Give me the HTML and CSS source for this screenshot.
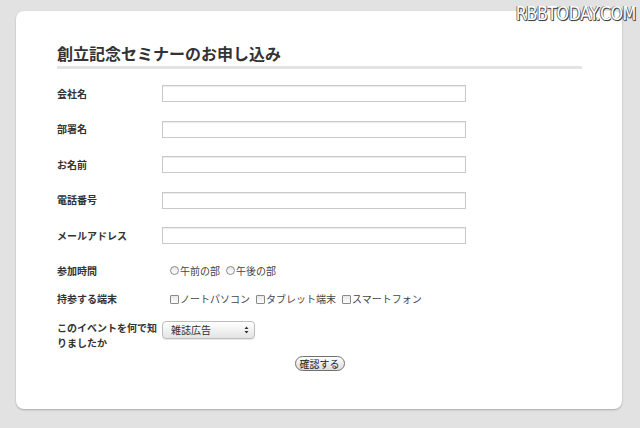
FILE: index.html
```html
<!DOCTYPE html>
<html lang="ja">
<head>
<meta charset="utf-8">
<title>創立記念セミナーのお申し込み</title>
<link rel="stylesheet" href="styles.css">
</head>
<body>
<div class="watermark">RBBTODAY.COM</div>
<div class="card">
  <h1 class="title">創立記念セミナーのお申し込み</h1>
  <div class="form">
    <div class="row text-row"><div class="label">会社名</div><div class="field"><span class="input"></span></div></div>
    <div class="row text-row"><div class="label">部署名</div><div class="field"><span class="input"></span></div></div>
    <div class="row text-row"><div class="label">お名前</div><div class="field"><span class="input"></span></div></div>
    <div class="row text-row"><div class="label">電話番号</div><div class="field"><span class="input"></span></div></div>
    <div class="row text-row"><div class="label">メールアドレス</div><div class="field"><span class="input"></span></div></div>
    <div class="row radio-row"><div class="label">参加時間</div>
      <div class="field options">
        <span class="opt"><span class="radio"></span>午前の部</span>
        <span class="opt"><span class="radio"></span>午後の部</span>
      </div>
    </div>
    <div class="row check-row"><div class="label">持参する端末</div>
      <div class="field options">
        <span class="opt"><span class="check"></span>ノートパソコン</span>
        <span class="opt"><span class="check"></span>タブレット端末</span>
        <span class="opt"><span class="check"></span>スマートフォン</span>
      </div>
    </div>
    <div class="row select-row"><div class="label multi">このイベントを何で知りましたか</div>
      <div class="field">
        <span class="select"><span class="select-text">雑誌広告</span>
          <svg class="arrows" width="5" height="8" viewBox="0 0 5 8"><path d="M2.5 0.5 L4.5 3 L0.5 3 Z M0.5 5 L4.5 5 L2.5 7.5 Z" fill="#333"/></svg>
        </span>
      </div>
    </div>
    <div class="submit-row"><span class="button">確認する</span></div>
  </div>
</div>
</body>
</html>
```

FILE: styles.css
```css
html, body {
  margin: 0;
  padding: 0;
}
body {
  background: #e2e2e2;
  width: 640px;
  height: 428px;
  overflow: hidden;
  position: relative;
  font-family: "Noto Sans CJK JP", "Liberation Sans", sans-serif;
  color: #333;
  padding: 11px 0 0 16px;
  box-sizing: border-box;
}
.watermark {
  position: absolute;
  top: 1px;
  right: 4px;
  font-family: "DejaVu Sans", "Liberation Sans", sans-serif;
  font-size: 19px;
  letter-spacing: -0.6px;
  color: #fff;
  text-shadow: -1px 0 0 #666, 1px 1px 0 #444, 0 1px 1px #555;
  transform: scaleX(0.84);
  transform-origin: right top;
  line-height: 24px;
}
.card {
  width: 606px;
  height: 398px;
  box-sizing: border-box;
  background: #fff;
  border-radius: 8px;
  box-shadow: 0 1px 2px rgba(0, 0, 0, 0.25);
  padding: 32px 40px 0 41px;
}
.title {
  margin: 0;
  font-size: 16px;
  line-height: 20px;
  font-weight: bold;
  color: #333;
  padding-bottom: 3px;
  border-bottom: 3px solid #e3e3e3;
}
.form {
  margin-top: 7px;
}
.row {
  display: flex;
  align-items: center;
}
.text-row {
  height: 35.5px;
}
.radio-row {
  height: 34px;
}
.check-row {
  height: 23px;
}
.select-row {
  align-items: flex-start;
  margin-top: 10px;
}
.label {
  width: 105px;
  flex: none;
  font-size: 10px;
  font-weight: bold;
  line-height: 16px;
  color: #333;
}
.label.multi {
  line-height: 15px;
  margin-top: -1px;
}
.field {
  display: flex;
  align-items: center;
}
.input {
  display: block;
  width: 304px;
  height: 17px;
  box-sizing: border-box;
  border: 1px solid #c9c9c9;
  box-shadow: inset 0 1px 1px rgba(0, 0, 0, 0.08);
  background: #fff;
}
.options {
  padding-left: 8px;
  gap: 6px;
}
.opt {
  display: flex;
  align-items: center;
  font-size: 10px;
  line-height: 14px;
  color: #444;
}
.radio, .check {
  display: inline-block;
  width: 9px;
  height: 9px;
  box-sizing: border-box;
  border: 1px solid #8a8a8a;
  background: linear-gradient(#e8e8e8, #fdfdfd);
  margin-right: 1px;
}
.radio {
  border-radius: 50%;
}
.check {
  border-radius: 1px;
}
.select {
  display: flex;
  align-items: center;
  justify-content: space-between;
  width: 93px;
  height: 18px;
  box-sizing: border-box;
  border: 1px solid #bdbdbd;
  border-radius: 4px;
  background: linear-gradient(#ffffff, #e4e4e4);
  padding: 0 5px 0 8px;
  box-shadow: 0 1px 1px rgba(0, 0, 0, 0.1);
}
.select-text {
  font-size: 10px;
  line-height: 16px;
  color: #333;
}
.arrows {
  display: block;
}
.submit-row {
  display: flex;
  justify-content: center;
  margin-top: 6px;
}
.button {
  display: block;
  width: 50px;
  height: 15px;
  box-sizing: border-box;
  border: 1px solid #707070;
  border-radius: 8px;
  background: linear-gradient(#ffffff, #dcdcdc);
  font-size: 10px;
  line-height: 13px;
  text-align: center;
  color: #222;
}
```
